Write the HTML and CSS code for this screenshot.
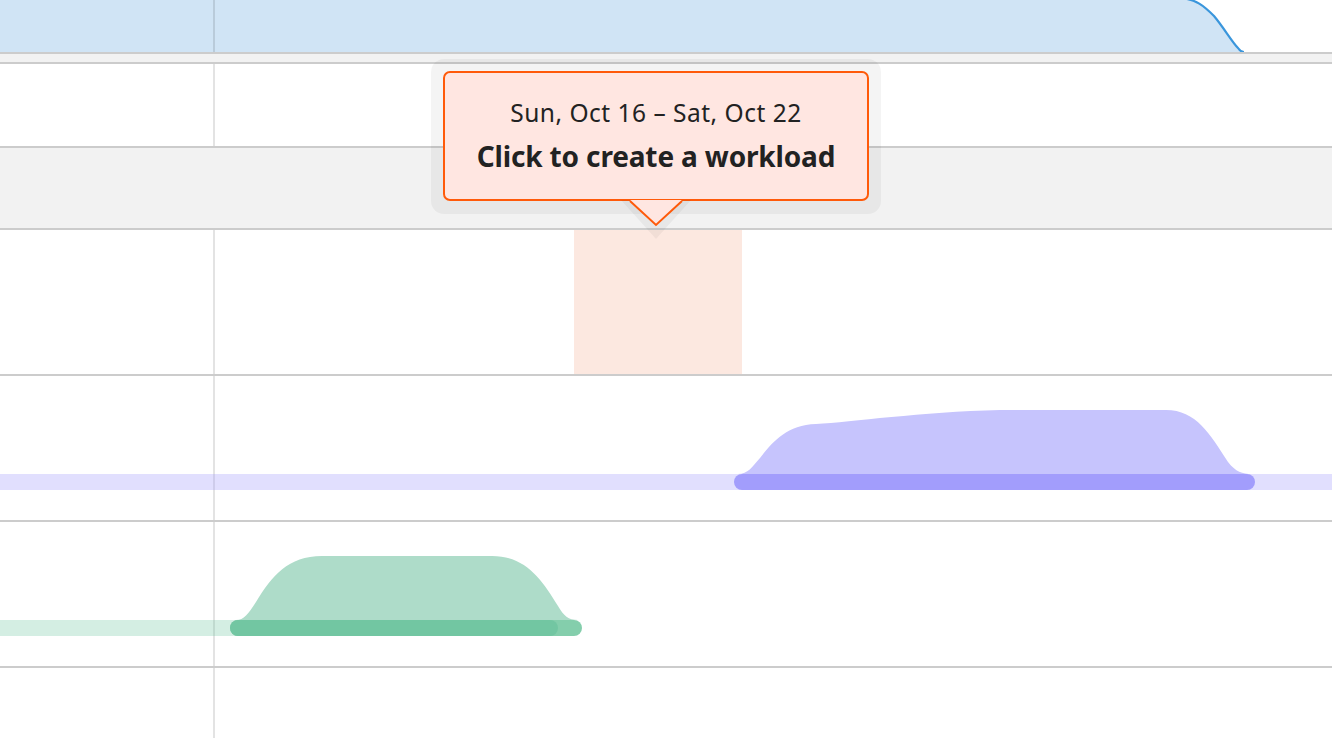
FILE: index.html
```html
<!DOCTYPE html>
<html lang="en">
<head>
<meta charset="utf-8">
<title>Schedule</title>
<link rel="stylesheet" href="styles.css">
</head>
<body>
<div class="timeline">
  <div class="row row-capacity">
    <svg class="overlay" width="1332" height="52" viewBox="0 0 1332 52">
      <path d="M0,-2 H1180 C1196,-1 1204,6 1214,16 C1224,28 1232,42 1238,48 C1240,51 1242,52 1244,52 H0 Z" fill="#d0e4f5"/>
      <path d="M1180,-2 C1196,-1 1204,6 1214,16 C1224,28 1232,42 1238,48 C1240,51 1242,52 1244,52" fill="none" stroke="#3a96dc" stroke-width="2.2"/>
    </svg>
    <div class="lead"></div>
    <div class="main"></div>
  </div>
  <div class="row row-spacer"></div>
  <div class="row row-short">
    <div class="lead"></div>
    <div class="main"></div>
  </div>
  <div class="row row-group"></div>
  <div class="row row-person">
    <div class="lead"></div>
    <div class="main"><div class="hover-week"></div></div>
  </div>
  <div class="row row-person">
    <div class="lead"></div>
    <div class="main"></div>
    <svg class="overlay" width="1332" height="144" viewBox="0 0 1332 144">
      <rect x="0" y="98" width="1332" height="16" fill="#a29dfc" fill-opacity="0.32"/>
      <path d="M738,98 C748,98 752,91 760,82 C772,67 786,49 816,48 C852,46 920,36 1000,34 L1166,34 C1196,34 1210,58 1228,86 C1236,96 1242,98 1252,98 Z" fill="#c6c4fd"/>
      <rect x="734" y="98" width="521" height="16" rx="8" fill="#a29dfc"/>
    </svg>
  </div>
  <div class="row row-person">
    <div class="lead"></div>
    <div class="main"></div>
    <svg class="overlay" width="1332" height="144" viewBox="0 0 1332 144">
      <rect x="0" y="98" width="244" height="16" fill="#72c6a2" fill-opacity="0.3"/>
      <path d="M236,98 C244,98 248,92 256,80 C272,54 288,34 322,34 L492,34 C526,34 542,58 558,84 C564,94 568,98 578,98 Z" fill="#aedcc9"/>
      <rect x="230" y="98" width="352" height="16" rx="8" fill="#84ceac"/>
      <rect x="230" y="98" width="328" height="16" rx="8" fill="#72c6a2"/>
    </svg>
  </div>
  <div class="row row-tail">
    <div class="lead"></div>
    <div class="main"></div>
  </div>

  <div class="tooltip">
    <div class="tooltip-box">
      <div class="tooltip-date">Sun, Oct 16 – Sat, Oct 22</div>
      <div class="tooltip-action">Click to create a workload</div>
    </div>
    <svg class="tooltip-arrow" width="70" height="42" viewBox="0 0 70 42">
      <path d="M0,0 L35,39 L70,0 Z" fill="rgba(0,0,0,0.045)"/>
      <path d="M9,0 L35,25 L61,0 Z" fill="#ffe6e1"/>
      <path d="M9,1 L35,25 L61,1" fill="none" stroke="#ff5a0a" stroke-width="2"/>
    </svg>
  </div>
</div>
</body>
</html>
```

FILE: styles.css
```css
html, body {
  margin: 0;
  padding: 0;
}

body {
  width: 1332px;
  height: 738px;
  overflow: hidden;
  background: #ffffff;
  font-family: "Noto Sans", "Open Sans", sans-serif;
  color: #222222;
}

.timeline {
  position: relative;
  width: 1332px;
  height: 738px;
  overflow: hidden;
}

.row {
  position: relative;
  display: flex;
  border-bottom: 2px solid #cccccc;
}

.lead {
  position: relative;
  z-index: 1;
  width: 213px;
  flex: none;
  border-right: 2px solid #e3e3e3;
}

.main {
  position: relative;
  flex: 1;
}

.overlay {
  position: absolute;
  left: 0;
  top: 0;
  z-index: 2;
}

.row-capacity {
  height: 52px;
}

.row-capacity .overlay {
  z-index: 0;
}

.row-capacity .lead {
  border-right-color: rgba(0, 0, 0, 0.11);
}

.row-spacer {
  height: 8px;
  background: #f2f2f2;
}

.row-short {
  height: 82px;
}

.row-group {
  height: 80px;
  background: #f2f2f2;
}

.row-person {
  height: 144px;
}

.row-tail {
  height: 70px;
  border-bottom: none;
}

.hover-week {
  margin-left: 359px;
  width: 168px;
  height: 100%;
  background: #fce8e0;
}

.tooltip {
  position: absolute;
  left: 431px;
  top: 59px;
  z-index: 5;
  width: 450px;
  height: 155px;
  padding: 12px;
  box-sizing: border-box;
  border-radius: 13px;
  background: rgba(0, 0, 0, 0.045);
}

.tooltip-box {
  height: 130px;
  box-sizing: border-box;
  border: 2px solid #ff5a0a;
  border-radius: 7px;
  background: #ffe6e1;
  text-align: center;
  padding-top: 24px;
}

.tooltip-date {
  font-size: 24.5px;
  line-height: 32px;
  letter-spacing: 0.5px;
  font-weight: 400;
  color: #222222;
}

.tooltip-action {
  margin-top: 9px;
  font-size: 28px;
  line-height: 36px;
  letter-spacing: -0.15px;
  font-weight: 700;
  color: #222222;
}

.tooltip-arrow {
  position: absolute;
  left: 190px;
  top: 141px;
}
```
